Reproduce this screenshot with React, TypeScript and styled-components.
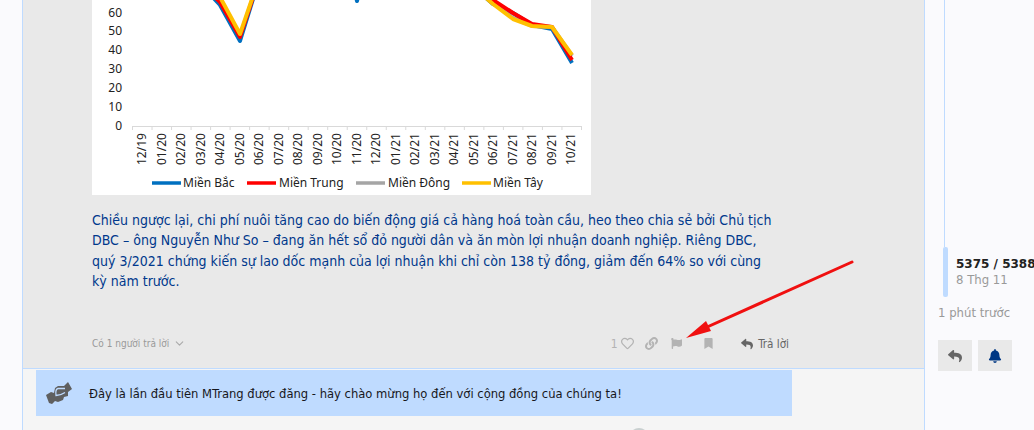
import React from "react";
import styled, { createGlobalStyle } from "styled-components";
import { FaRegHeart, FaLink, FaFlag, FaBookmark, FaReply, FaBell } from "react-icons/fa";
import { FiChevronDown } from "react-icons/fi";

const Global = createGlobalStyle`
  html, body { margin: 0; padding: 0; height: 430px; overflow: hidden; background: #fafafd; }
  body { font-family: "DejaVu Sans Condensed", "DejaVu Sans", sans-serif; font-stretch: condensed; }
`;

const Page = styled.div`
  display: flex; width: 1034px; height: 430px; overflow: hidden; background: #fafafd;
`;
const Gutter = styled.div`width: 22px; flex: none;`;
const Main = styled.main`
  width: 903px; flex: none; height: 430px; background: #f5f5f5;
  border-left: 1px solid #bfdbff; border-right: 1px solid #bfdbff; box-sizing: border-box;
`;
const Post = styled.article`
  height: 369px; box-sizing: border-box; background: #e9e9e9; border-bottom: 1px solid #bfdbff;
  padding-left: 69px; display: flex; flex-direction: column; position: relative;
`;
const Chart = styled.svg`
  display: block; width: 499px; height: 195px; flex: none;
`;
const Body = styled.p`
  margin: 15px 0 0; width: 684px; font-size: 14px; line-height: 20.4px; color: #00388c;
`;
const Actions = styled.div`
  margin-top: auto; height: 49px; width: 697px; display: flex; align-items: center; color: #aaa; box-sizing: border-box;
`;
const Replies = styled.span`
  font-size: 10px; color: #999; display: flex; align-items: center; gap: 4px; margin-right: auto;
`;
const Action = styled.span<{ $gap?: number }>`
  display: inline-flex; align-items: center; font-size: 12px; color: #b3b3b3; margin-left: ${p => p.$gap ?? 0}px;
`;
const ReplyAction = styled(Action)`
  color: #666; gap: 5px; font-size: 11.6px;
`;
const Arrow = styled.svg`
  position: absolute; left: 617px; top: 250px; width: 240px; height: 100px; overflow: visible;
`;
const Banner = styled.div`
  margin: 1px 0 0 13px; width: 756px; height: 46px; background: #bfdbff; display: flex; align-items: center;
  font-size: 12.85px; color: #17171c; box-sizing: border-box; padding-left: 53px; position: relative;
`;
const BannerIcon = styled.svg`
  position: absolute; left: 0; top: 2px; width: 50px; height: 40px;
`;
const AvatarTop = styled.div`
  width: 20px; height: 20px; border-radius: 50%; background: #c9d0d0; margin: 12px 0 0 606px;
`;
const Side = styled.aside`
  flex: 1; padding-left: 13px; position: relative; min-width: 0;
`;
const Track = styled.div`
  margin-left: 6px; border-left: 1px solid #bfdbff; box-sizing: border-box; height: 247px;
`;
const Handle = styled.div`
  display: flex; gap: 8px; margin-left: 5px; height: 50px;
`;
const Bar = styled.div`
  width: 5px; height: 50px; background: #bfdbff; border-radius: 2px; flex: none;
`;
const Counts = styled.div`
  white-space: nowrap; padding: 9px 0 0 0;
`;
const Count = styled.div`
  font-family: "DejaVu Sans", sans-serif; font-stretch: normal;
  font-size: 12px; font-weight: 700; color: #222; line-height: 16px;
`;
const Sub = styled.div`
  font-size: 13px; color: #999; line-height: 16px;
`;
const Ago = styled(Sub)`
  margin-top: 8px; white-space: nowrap;
`;
const Btns = styled.div`display: flex; gap: 6px; margin-top: 19px;`;
const Btn = styled.button<{ $dark?: boolean }>`
  width: 34px; height: 31px; border: 0; padding: 0; background: #e9e9e9; color: ${p => p.$dark ? "#003884" : "#666"};
  display: flex; align-items: center; justify-content: center; font-size: 14px;
`;

const months = ["12/19","01/20","02/20","03/20","04/20","05/20","06/20","07/20","08/20","09/20","10/20","11/20","12/20","01/21","02/21","03/21","04/21","05/21","06/21","07/21","08/21","09/21","10/21"];
const x0 = 40, step = 19.52;
const xAt = (i: number) => 50 + i * step;
const chartFont = "Noto Sans, sans-serif";

export default function App() {
  return (
    <Page>
      <Global />
      <Gutter />
      <Main>
        <Post>
          <Chart viewBox="0 0 499 195">
            <rect width="499" height="195" fill="#fff" />
            {[60,50,40,30,20,10,0].map((v, i) => (
              <text key={v} x={x0 - 10} y={16.5 + i * 18.9} textAnchor="end" fontSize="12" fontFamily={chartFont} fill="#222">{v}</text>
            ))}
            <line x1="40" x2="489.5" y1="126.5" y2="126.5" stroke="#d9d9d9" />
            {months.map((_, i) => (
              <line key={i} x1={40.5 + i * step} x2={40.5 + i * step} y1="126" y2="130" stroke="#d9d9d9" />
            ))}
            <line x1="489.5" x2="489.5" y1="126" y2="130" stroke="#d9d9d9" />
            {months.map((m, i) => (
              <text key={m} transform={`translate(${xAt(i) + 4},165) rotate(-90)`} fontSize="12" fontFamily={chartFont} fill="#222">{m}</text>
            ))}
            <g fill="none" strokeWidth="4" strokeLinejoin="round">
              <polyline stroke="#0070c0" points="105,-20 128,5 148,41 170,-30" />
              <polyline stroke="#0070c0" points="260,-20 265,1 270,-20" />
              <polyline stroke="#0070c0" points="385,-10 401,4 421,13 440,25 460,29 480,63" />
              <polyline stroke="#ff0000" points="105,-20 128,2 148,37 170,-30" />
              <polyline stroke="#a5a5a5" points="385,-12 401,3 421,18 440,26 460,27 480,56" />
              <polyline stroke="#ff0000" points="385,-14 401,0 421,13 440,24 460,27 480,60" />
              <polyline stroke="#ffc000" points="108,-20 128,-3 148,34 170,-30" />
              <polyline stroke="#ffc000" points="385,-10 401,4 421,19 440,26 460,27 480,55" />
            </g>
            <g fontSize="12" fontFamily={chartFont} fill="#222">
              <line x1="60" x2="89" y1="183" y2="183" stroke="#0070c0" strokeWidth="3.5" />
              <text x="91" y="187">Miền Bắc</text>
              <line x1="155" x2="184" y1="183" y2="183" stroke="#ff0000" strokeWidth="3.5" />
              <text x="187" y="187">Miền Trung</text>
              <line x1="264" x2="293" y1="183" y2="183" stroke="#a5a5a5" strokeWidth="3.5" />
              <text x="296" y="187">Miền Đông</text>
              <line x1="370" x2="399" y1="183" y2="183" stroke="#ffc000" strokeWidth="3.5" />
              <text x="401" y="187">Miền Tây</text>
            </g>
          </Chart>
          <Body>
            Chiều ngược lại, chi phí nuôi tăng cao do biến động giá cả hàng hoá toàn cầu, heo theo chia sẻ bởi Chủ tịch DBC – ông Nguyễn Như So – đang ăn hết sổ đỏ người dân và ăn mòn lợi nhuận doanh nghiệp. Riêng DBC, quý 3/2021 chứng kiến sự lao dốc mạnh của lợi nhuận khi chỉ còn 138 tỷ đồng, giảm đến 64% so với cùng kỳ năm trước.
          </Body>
          <Actions>
            <Replies>Có 1 người trả lời <FiChevronDown size={13} color="#aaa" /></Replies>
            <Action>1&nbsp;<FaRegHeart size={13} /></Action>
            <Action $gap={11}><FaLink size={13} /></Action>
            <Action $gap={13}><FaFlag size={11} /></Action>
            <Action $gap={21}><FaBookmark size={11} /></Action>
            <ReplyAction $gap={27}><FaReply size={12} /> Trả lời</ReplyAction>
          </Actions>
          <Arrow viewBox="0 0 240 100">
            <line x1="212" y1="12" x2="56" y2="82" stroke="#f01010" strokeWidth="3" strokeLinecap="round" />
            <polygon points="46,88 66,71 71,81" fill="#f01010" />
          </Arrow>
        </Post>
        <Banner>
          <BannerIcon viewBox="0 0 50 40">
            <path d="M10 23 L15 20 L18 21 L19 16 L22 14 L28 14 L32 10 L36 17 L32 20 L32 24 L28 25 L27 28 L22 30 L19 29 L16 32 L13 31 Z" fill="#5f5f5f" />
            <path d="M29 16.5 L22 16.5 C20 17 19.5 20 20 23.5 C23 23.5 26 22.5 29 20.5" fill="none" stroke="#bfdbff" strokeWidth="1.3" />
          </BannerIcon>
          Đây là lần đầu tiên MTrang được đăng - hãy chào mừng họ đến với cộng đồng của chúng ta!
        </Banner>
        <AvatarTop />
      </Main>
      <Side>
        <Track />
        <Handle>
          <Bar />
          <Counts>
            <Count>5375 / 5388</Count>
            <Sub>8 Thg 11</Sub>
          </Counts>
        </Handle>
        <Ago>1 phút trước</Ago>
        <Btns>
          <Btn><FaReply /></Btn>
          <Btn $dark><FaBell /></Btn>
        </Btns>
      </Side>
    </Page>
  );
}
